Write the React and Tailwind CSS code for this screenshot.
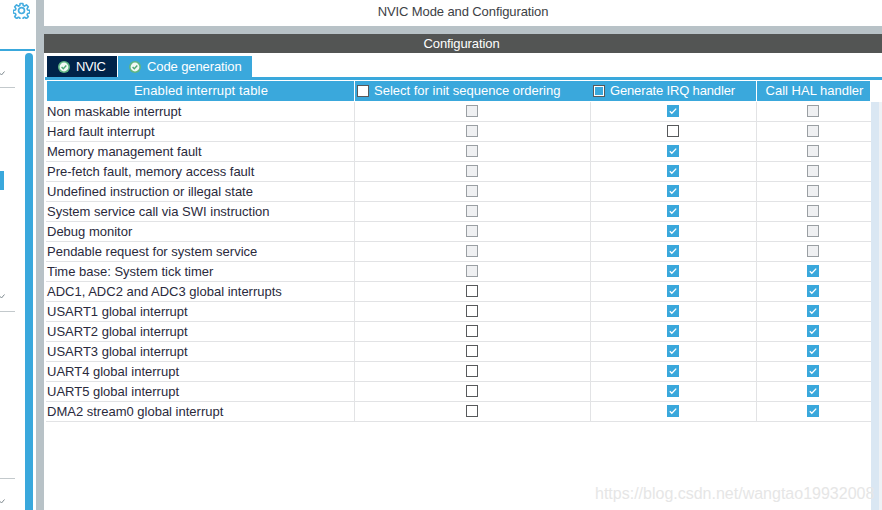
import React from "react";

const Gear = () => (
  <svg width="17" height="17" viewBox="0 0 24 24" fill="none" stroke="#45ade0" strokeWidth="2.4" strokeLinejoin="round" className="-mr-px">
    <path d="M10 1.5h4l.6 3.2 2 .8 2.7-1.8 2.8 2.8-1.8 2.7.8 2 3.2.6v4l-3.2.6-.8 2 1.8 2.7-2.8 2.8-2.7-1.8-2 .8-.6 3.2h-4l-.6-3.2-2-.8-2.7 1.8-2.8-2.8 1.8-2.7-.8-2-3.2-.6v-4l3.2-.6.8-2-1.8-2.7 2.8-2.8 2.7 1.8 2-.8z" transform="translate(.6 .6) scale(.95)" />
    <circle cx="12" cy="12" r="4.2" />
  </svg>
);

const Chevron = () => (
  <svg width="6" height="5" viewBox="0 0 6 5" fill="none" stroke="#7f8a90" strokeWidth="1">
    <path d="M-2 0.5 L1.5 4 L4.5 0.5" />
  </svg>
);

const TabCheck = () => (
  <svg width="12" height="12" viewBox="0 0 12 12" className="shrink-0">
    <circle cx="6" cy="6" r="6" fill="#5fb683" />
    <circle cx="6" cy="6" r="4.4" fill="#f2f8f4" />
    <path d="M3.6 6l1.7 1.7 3-3.1" fill="none" stroke="#4ca873" strokeWidth="1.4" />
  </svg>
);

const Box = ({ kind }) => {
  if (kind === "on")
    return (
      <span className="flex h-[12px] w-[12px] items-center justify-center bg-[#3aa8dc]">
        <svg width="12" height="12" viewBox="0 0 12 12">
          <path d="M2.8 6.2l2 2 4.4-4.6" fill="none" stroke="#fff" strokeWidth="1.3" />
        </svg>
      </span>
    );
  if (kind === "dis")
    return <span className="block h-[12px] w-[12px] border border-[#9a9fa3] bg-[#eff0f2]" />;
  return <span className="block h-[12px] w-[12px] border border-[#57595b] bg-white" />;
};

const rows = [
  ["Non maskable interrupt", "dis", "on", "dis"],
  ["Hard fault interrupt", "dis", "off", "dis"],
  ["Memory management fault", "dis", "on", "dis"],
  ["Pre-fetch fault, memory access fault", "dis", "on", "dis"],
  ["Undefined instruction or illegal state", "dis", "on", "dis"],
  ["System service call via SWI instruction", "dis", "on", "dis"],
  ["Debug monitor", "dis", "on", "dis"],
  ["Pendable request for system service", "dis", "on", "dis"],
  ["Time base: System tick timer", "dis", "on", "on"],
  ["ADC1, ADC2 and ADC3 global interrupts", "off", "on", "on"],
  ["USART1 global interrupt", "off", "on", "on"],
  ["USART2 global interrupt", "off", "on", "on"],
  ["USART3 global interrupt", "off", "on", "on"],
  ["UART4 global interrupt", "off", "on", "on"],
  ["UART5 global interrupt", "off", "on", "on"],
  ["DMA2 stream0 global interrupt", "off", "on", "on"],
];

export default function App() {
  return (
    <div className="relative flex h-[510px] w-[882px] overflow-hidden bg-white font-['Liberation_Sans',Arial,sans-serif] text-[13px] text-[#2a2a3c]">
      {/* Left sidebar */}
      <aside className="relative flex w-[36px] shrink-0 flex-col">
        <div className="flex h-[49px] shrink-0 justify-end pr-[7px] pt-[2px]">
          <Gear />
        </div>
        <div className="h-[2px] w-[35px] shrink-0 bg-[#3aa8dc]" />
        <div className="flex min-h-0 flex-1 pt-[2px]">
          <div className="relative w-[25px] shrink-0">
            <div className="absolute left-0 top-[18px]"><Chevron /></div>
            <div className="absolute left-0 top-[34px] h-px w-[15px] bg-[#c3c9cc]" />
            <div className="absolute left-0 top-[118px] h-[19px] w-[4px] bg-[#3aa8dc]" />
            <div className="absolute left-0 top-[241px] "><Chevron /></div>
            <div className="absolute left-0 top-[258px] h-px w-[15px] bg-[#c3c9cc]" />
            <div className="absolute left-0 top-[425px] h-px w-[15px] bg-[#c3c9cc]" />
            <div className="absolute left-0 top-[446px]"><Chevron /></div>
          </div>
          <div className="w-[8px] rounded-t-[4px] bg-[#3aa8dc]" />
        </div>
      </aside>

      <div className="w-[8px] shrink-0 bg-[#b8c2c7]" />

      {/* Main */}
      <main className="flex min-w-0 flex-1 flex-col">
        <div className="flex h-[26px] shrink-0 items-center justify-center pb-[3px] tracking-[-0.1px] text-[#3d4145]">
          NVIC Mode and Configuration
        </div>
        <div className="h-[8px] shrink-0 bg-[#b8c2c7]" />
        <div className="flex h-[19px] shrink-0 items-center justify-center bg-[#535554] pr-[3px] pt-px tracking-[-0.1px] text-white">
          Configuration
        </div>

        {/* Tabs */}
        <div className="ml-[1px] mt-[3px] flex h-[24px] shrink-0 flex-col">
          <div className="ml-[2px] flex h-[21px] shrink-0 gap-px">
            <div className="flex w-[70px] items-center gap-[6px] bg-[#002349] pl-[11px] tracking-[-0.4px] text-white">
              <TabCheck />
              NVIC
            </div>
            <div className="flex w-[134px] items-center gap-[6px] bg-[#3aa8dc] pl-[11px] tracking-[-0.1px] text-white">
              <TabCheck />
              Code generation
            </div>
          </div>
          <div className="h-[3px] shrink-0 bg-[#3aa8dc]" />
        </div>

        {/* Table */}
        <div className="flex min-h-0 flex-1">
          <div className="w-[827px] shrink-0 pl-[2px] pt-[1px]">
            <div className="ml-[1px] flex h-[20px] w-[823px] bg-[#3aa8dc] text-white">
              <div className="flex w-[308px] items-center justify-center border-r border-white pl-[1px] tracking-[0.14px]">
                Enabled interrupt table
              </div>
              <div className="flex w-[235px] items-center gap-[5px] pl-[2px]">
                <Box kind="off" />
                Select for init sequence ordering
              </div>
              <div className="flex w-[167px] items-center gap-[5px] border-r border-white pl-[3px] tracking-[-0.15px]">
                <span className="flex h-[12px] w-[12px] items-center justify-center border border-[#57595b] bg-white">
                  <span className="h-[8px] w-[8px] bg-[#3aa8dc]" />
                </span>
                Generate IRQ handler
              </div>
              <div className="flex w-[113px] items-center justify-center pl-[2px]">
                Call HAL handler
              </div>
            </div>
            <div className="pt-px">
              {rows.map(([name, a, b, c]) => (
                <div key={name} className="flex h-[20px] w-[825px] border-b border-[#e2e3e5]">
                  <div className="flex w-[309px] items-center border-r border-[#e2e3e5] pl-[1px]">{name}</div>
                  <div className="flex w-[236px] items-start justify-center border-r border-[#e2e3e5] pr-[1px] pt-[3px]">
                    <Box kind={a} />
                  </div>
                  <div className="flex w-[166px] items-start justify-center border-r border-[#e2e3e5] pr-[1px] pt-[3px]">
                    <Box kind={b} />
                  </div>
                  <div className="flex w-[114px] items-start justify-center pr-[2px] pt-[3px]">
                    <Box kind={c} />
                  </div>
                </div>
              ))}
            </div>
          </div>
          <div className="mt-[22px] w-[8px] shrink-0 bg-[#dae7f3]" />
          <div className="mt-[22px] w-[3px] shrink-0 bg-[#eef1f5]" />
        </div>
      </main>

      <div className="absolute left-[595px] top-[482px] select-none text-[16px] text-[#e6e6e6]">
        https://blog.csdn.net/wangtao19932008
      </div>
    </div>
  );
}
